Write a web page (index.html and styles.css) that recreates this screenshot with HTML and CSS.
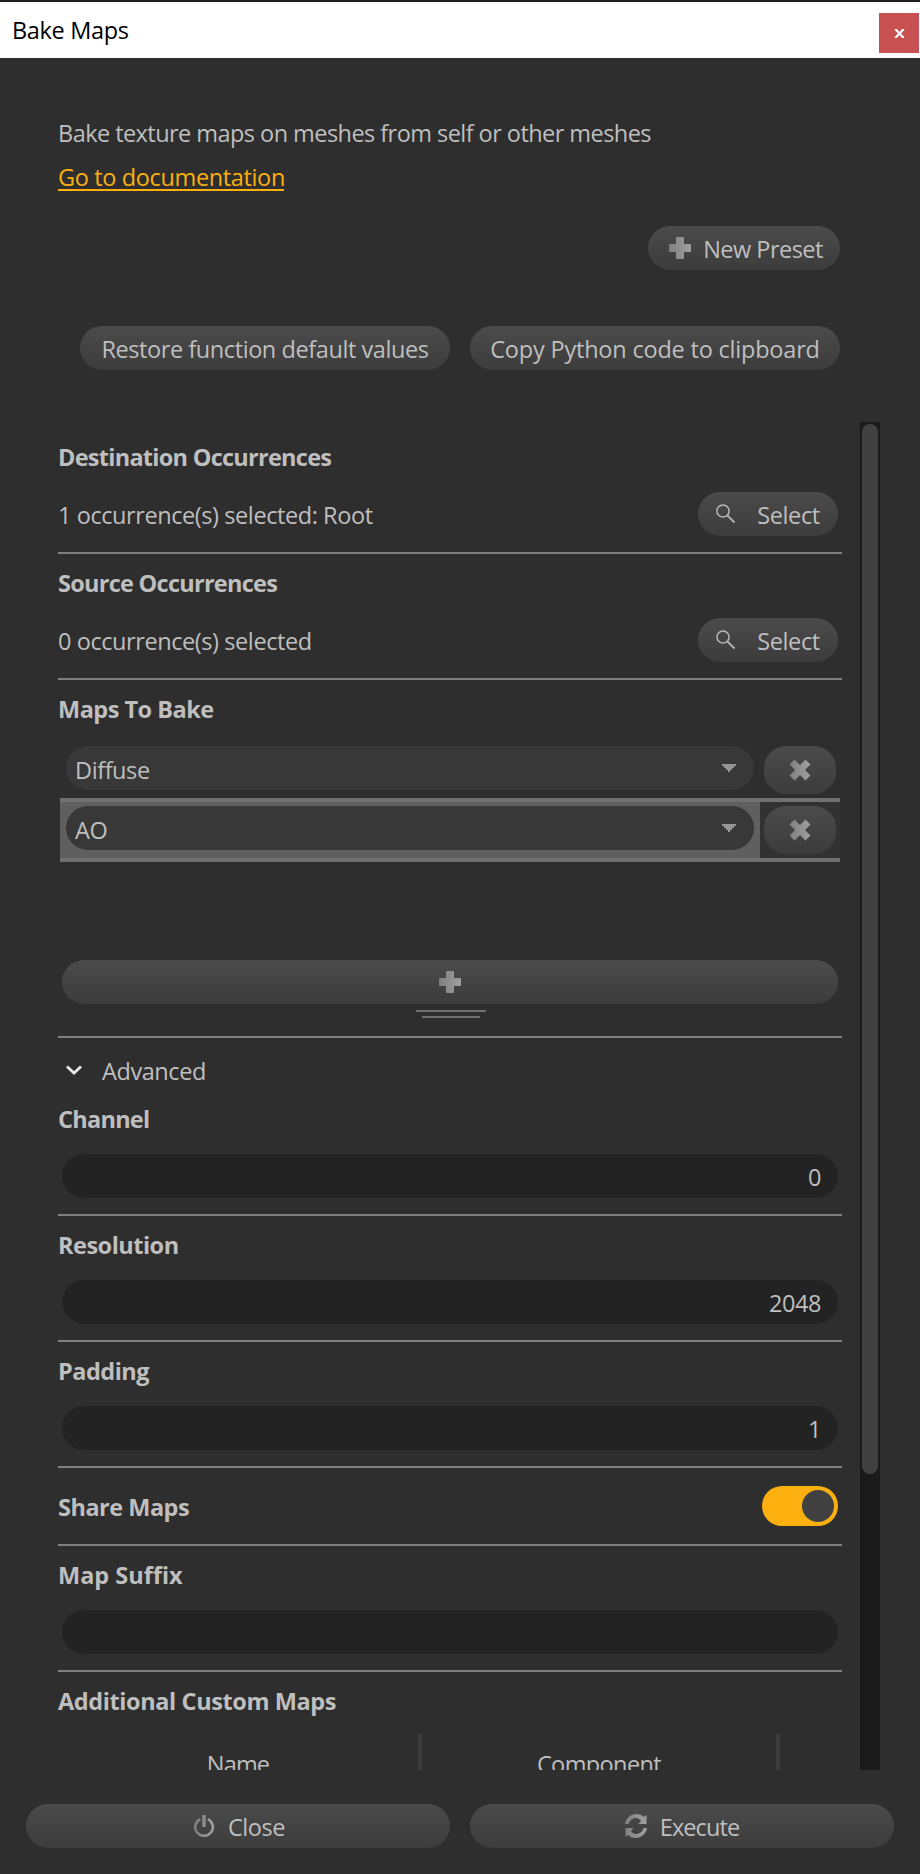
FILE: index.html
```html
<!DOCTYPE html>
<html lang="en">
<head>
<meta charset="utf-8">
<title>Bake Maps</title>
<link rel="stylesheet" href="styles.css">
</head>
<body>
<svg class="defs" width="0" height="0" aria-hidden="true">
  <defs>
    <linearGradient id="metal" x1="0" x2="1" y1="0" y2="0"><stop offset="0" stop-color="#808080"/><stop offset="1" stop-color="#a0a0a0"/></linearGradient>
    <symbol id="plus" viewBox="0 0 22 22"><path fill="url(#metal)" d="M8 0h6q1 0 1 1v6h6q1 0 1 1v6q0 1-1 1h-6v6q0 1-1 1H8q-1 0-1-1v-6H1q-1 0-1-1V8q0-1 1-1h6V1q0-1 1-1z"/></symbol>
    <symbol id="cross" viewBox="0 0 22 22"><path fill="url(#metal)" d="M5.500 .6 11 6 16.500 .6 21.400 5.500 16 11l5.400 5.500-4.900 4.900L11 16l-5.500 5.400L.6 16.500 6 11 .6 5.500z"/></symbol>
    <symbol id="search" viewBox="0 0 20 20"><circle cx="7" cy="7" r="6.100" fill="none" stroke="#b8b8b8" stroke-width="1.500"/><path d="M11.300 11.300 18.500 18.500" fill="none" stroke="#b8b8b8" stroke-width="1.800"/></symbol>
  </defs>
</svg>
<div class="window">
  <header class="titlebar">
    <h1 class="title">Bake Maps</h1>
    <button class="close-x" aria-label="Close window"><svg width="11" height="9" viewBox="0 0 11 9"><path d="M1.300 0 9.700 9M9.700 0 1.300 9" stroke="#fff" stroke-width="2.200"/></svg></button>
  </header>
  <section class="intro">
    <p class="desc">Bake texture maps on meshes from self or other meshes</p>
    <a class="link" href="#">Go to documentation</a>
    <div class="actions preset"><button class="btn new"><svg width="22" height="22"><use href="#plus"/></svg><span>New Preset</span></button></div>
    <div class="actions"><button class="btn wide">Restore function default values</button><button class="btn wide copy">Copy Python code to clipboard</button></div>
  </section>
  <main class="scroll">
    <div class="fields">
      <section class="field">
        <h2 class="tight">Destination Occurrences</h2>
        <div class="pick"><span>1 occurrence(s) selected: Root</span><button class="btn select"><svg width="20" height="20"><use href="#search"/></svg><span>Select</span></button></div>
      </section>
      <section class="field">
        <h2 class="tight">Source Occurrences</h2>
        <div class="pick"><span>0 occurrence(s) selected</span><button class="btn select"><svg width="20" height="20"><use href="#search"/></svg><span>Select</span></button></div>
      </section>
      <section class="field maps">
        <h2>Maps To Bake</h2>
        <div class="map-row">
          <div class="combo-cell"><div class="combo"><span>Diffuse</span><svg width="14" height="8" viewBox="0 0 14 8"><path d="M0 0H14V2H12V4H10V6H8V8H6V6H4V4H2V2H0z" fill="#959595"/></svg></div></div>
          <div class="remove-cell"><button class="btn remove" aria-label="Remove"><svg width="22" height="22"><use href="#cross"/></svg></button></div>
        </div>
        <div class="map-row selected">
          <div class="combo-cell"><div class="combo"><span>AO</span><svg width="14" height="8" viewBox="0 0 14 8"><path d="M0 0H14V2H12V4H10V6H8V8H6V6H4V4H2V2H0z" fill="#959595"/></svg></div></div>
          <div class="remove-cell"><button class="btn remove" aria-label="Remove"><svg width="22" height="22"><use href="#cross"/></svg></button></div>
        </div>
        <button class="btn add" aria-label="Add map"><svg width="22" height="22"><use href="#plus"/></svg></button>
        <div class="grip"><i></i><i></i></div>
      </section>
      <div class="advanced"><svg width="16" height="11" viewBox="0 0 16 11"><path d="M1 1.500 8 8 15 1.500" fill="none" stroke="#e8e8e8" stroke-width="2.800"/></svg><span>Advanced</span></div>
      <section class="field"><h2 class="tight">Channel</h2><div class="input">0</div></section>
      <section class="field"><h2>Resolution</h2><div class="input">2048</div></section>
      <section class="field"><h2>Padding</h2><div class="input">1</div></section>
      <section class="field share"><h2>Share Maps</h2><div class="toggle"><i></i></div></section>
      <section class="field"><h2 class="loose">Map Suffix</h2><div class="input"></div></section>
      <section class="custom">
        <h2>Additional Custom Maps</h2>
        <div class="columns"><span class="name">Name</span><span class="component">Component</span></div>
      </section>
    </div>
    <div class="track"><div class="thumb"></div></div>
  </main>
  <footer class="footer">
    <button class="btn close"><svg width="20" height="22" viewBox="0 0 20 22"><path d="M6.200 4.100A8.800 8.800 0 1 0 13.800 4.100" fill="none" stroke="url(#metal)" stroke-width="2.500"/><path d="M8.300 0H11.700V12H8.300z" fill="#8c8c8c"/></svg><span>Close</span></button>
    <button class="btn execute"><svg width="22" height="24" viewBox="0 0 22 24"><path d="M0 10C1 4 6 0 11.500 0 14.500 0 17 1.200 19 3L21.500 1V10H13.500L16 7C14.500 5 13 4 11 4 7.500 4 4.500 6.500 3.500 10zM22 14C21 20 16 24 10.500 24 7.500 24 5 22.800 3 21L.5 23V14H8.500L6 17C7.500 19 9 20 11 20 14.500 20 17.500 17.500 18.500 14z" fill="url(#metal)"/></svg><span>Execute</span></button>
  </footer>
</div>
</body>
</html>
```
FILE: styles.css
```css
* { box-sizing: border-box; }
body {
  margin: 0;
  background: #2e2e2e;
  color: #bfbfbf;
  font: 23.5px/32px "Open Sans", "Noto Sans", sans-serif;
  letter-spacing: -0.42px;
}
h1, h2, p { margin: 0; font-size: inherit; }
svg { display: block; flex: none; }
.defs { position: absolute; }
.window { display: flex; flex-direction: column; width: 920px; height: 1874px; overflow: hidden; }

.titlebar {
  display: flex; justify-content: space-between; align-items: flex-start;
  height: 58px; padding: 11px 1px 0 12px;
  background: #fff; border-top: 2px solid #231f20; color: #000;
}
.title { font-weight: 400; letter-spacing: -0.33px; line-height: 34px; }
.close-x { display: flex; align-items: center; justify-content: center; width: 40px; height: 40px; padding: 0; border: 0; background: #c75050; }

.intro { height: 364px; padding: 59px 80px 0 58px; }
.desc { letter-spacing: -0.55px; }
.link {
  display: block; width: 226px; height: 31px; margin-top: 11px;
  color: #fbb010; border-bottom: 2px solid #fbb010;
  text-decoration: none; letter-spacing: -0.36px; line-height: 35px; white-space: nowrap;
}
.actions { display: flex; justify-content: flex-end; gap: 20px; }
.preset { margin: 35px 0 56px; }

.btn {
  display: flex; align-items: center; justify-content: center;
  height: 44px; padding: 0; border: 0; border-radius: 22px;
  background: linear-gradient(#4b4b4b, #3c3c3c);
  color: #bfbfbf; font: inherit; letter-spacing: inherit; line-height: 44px; white-space: nowrap;
}
.btn span, .wide { padding-top: 2px; }
.new { width: 192px; gap: 12px; padding-left: 4px; letter-spacing: -0.52px; }
.wide { width: 370px; }
.copy { letter-spacing: -0.2px; }

.scroll { display: flex; height: 1348px; overflow: hidden; }
.fields { width: 784px; margin: 6px 18px 0 58px; }
.field { height: 126px; border-bottom: 2px solid #808080; }
h2 { height: 64px; font-weight: 700; line-height: 58px; letter-spacing: -0.5px; }
.tight { letter-spacing: -0.73px; }
.loose { letter-spacing: 0; }
.pick { display: flex; justify-content: space-between; height: 44px; padding-right: 4px; line-height: 47px; }
.select { width: 140px; gap: 21px; letter-spacing: -0.35px; }
.select svg { margin-top: -1px; }

.maps { height: 358px; }
.maps h2 { height: 58px; }
.map-row { display: flex; width: 780px; height: 60px; margin-left: 2px; border: solid transparent; border-width: 4px 0; }
.combo-cell { width: 700px; padding: 4px 6px; }
.remove-cell { width: 80px; padding: 4px; }
.combo { display: flex; justify-content: space-between; align-items: center; height: 44px; padding: 0 18px 0 9px; border-radius: 22px; background: #383838; }
.combo span { padding-top: 4px; }
.remove { width: 72px; height: 48px; }
.selected { height: 64px; border-color: #707070; }
.selected .combo-cell { background: #5f5f5f; }
.selected .remove-cell { background: #323232; }
.add { width: 776px; margin: 98px 0 6px 4px; }
.grip { display: flex; flex-direction: column; align-items: center; gap: 4px; width: 786px; }
.grip i { width: 70px; height: 2px; background: #707070; }
.grip i + i { width: 58px; }

.advanced { display: flex; align-items: center; gap: 20px; height: 52px; padding: 14px 0 0 8px; }
.advanced svg { margin-top: -1px; }
.input { height: 44px; margin: 0 4px; padding-right: 17px; border-radius: 22px; background: #232323; line-height: 47px; text-align: right; }
.share { display: flex; justify-content: space-between; align-items: center; height: 78px; padding-right: 4px; }
.share h2 { height: auto; padding-top: 1px; }
.toggle { display: flex; justify-content: flex-end; width: 76px; height: 40px; padding: 4px; border-radius: 20px; background: #fbb010; }
.toggle i { width: 32px; height: 32px; border-radius: 50%; background: #414141; }
.custom h2 { height: 62px; letter-spacing: -0.4px; }
.columns { display: flex; height: 48px; line-height: 60px; text-align: center; }
.name { width: 364px; border-right: 4px solid #3c3c3c; letter-spacing: -0.8px; }
.component { width: 358px; border-right: 4px solid #3c3c3c; letter-spacing: -0.6px; }

.track { width: 20px; padding: 2px; background: #1a1a1a; }
.thumb { height: 1050px; border-radius: 8px; background: #414141; }

.footer { display: grid; grid-template-columns: 424px 424px; gap: 20px; padding: 34px 26px 0; }
.footer .btn { gap: 13px; }
.footer .close { gap: 14px; padding-left: 3px; }
.footer .execute { letter-spacing: -0.9px; }
```
